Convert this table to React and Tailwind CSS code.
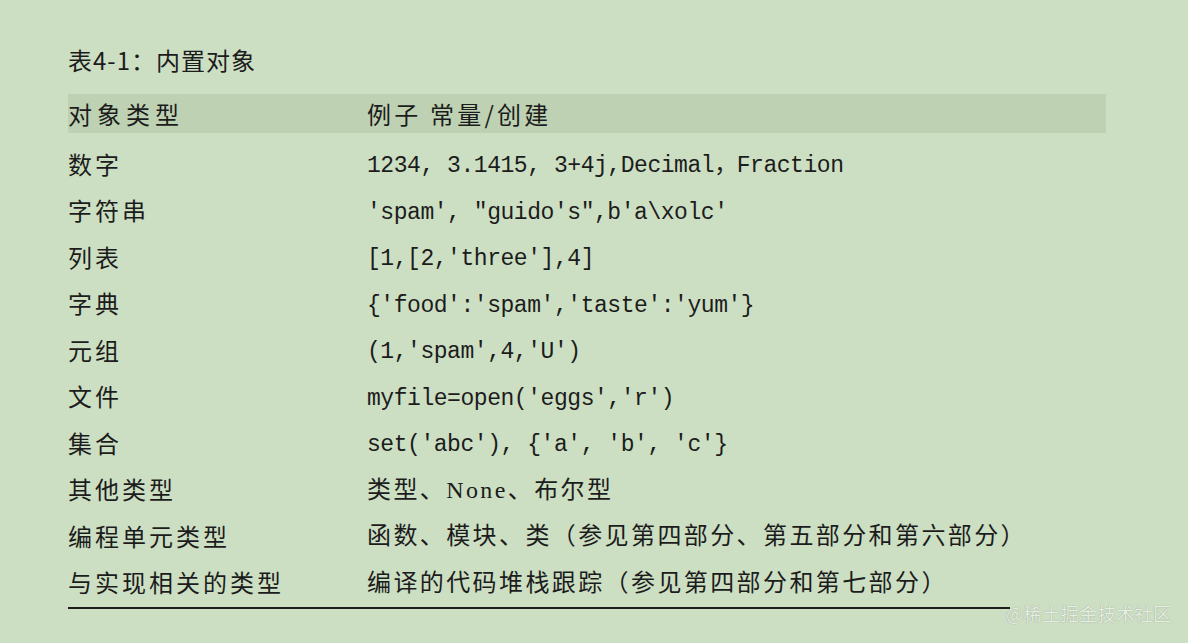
const rows = [
  { label: '数字', value: '1234, 3.1415, 3+4j,Decimal，Fraction', mono: true },
  { label: '字符串', value: `'spam', "guido's",b'a\\xolc'`, mono: true },
  { label: '列表', value: "[1,[2,'three'],4]", mono: true },
  { label: '字典', value: "{'food':'spam','taste':'yum'}", mono: true },
  { label: '元组', value: "(1,'spam',4,'U')", mono: true },
  { label: '文件', value: "myfile=open('eggs','r')", mono: true },
  { label: '集合', value: "set('abc'), {'a', 'b', 'c'}", mono: true },
  { label: '其他类型', value: '类型、None、布尔型', mono: false },
  { label: '编程单元类型', value: '函数、模块、类（参见第四部分、第五部分和第六部分）', mono: false },
  { label: '与实现相关的类型', value: '编译的代码堆栈跟踪（参见第四部分和第七部分）', mono: false },
];

function App() {
  return (
    <div className="relative w-full h-[643px] bg-[#cddfc3] pl-[68px] pt-[44px] text-[#1c1c1c] font-['Noto_Sans_CJK_SC',sans-serif]">
      <h1 className="text-[24px] leading-[32px] font-normal tracking-[1px]">表4-1：内置对象</h1>

      {/* header band */}
      <div className="mt-[18px] w-[1038px] h-[39px] bg-[#bed2b3] flex items-center">
        <div className="w-[299px] shrink-0 text-[24px] tracking-[5px]">对象类型</div>
        <div className="text-[24px] tracking-[3.2px]">例子 常量/创建</div>
      </div>

      <div className="mt-[9px] w-[1038px]">
        {rows.map((row) => (
          <div key={row.label} className="h-[46.5px] flex items-center">
            <div className="w-[299px] shrink-0 text-[24px] tracking-[3px] whitespace-nowrap pb-[3px]">{row.label}</div>
            {row.mono ? (
              <div className="font-['Liberation_Mono','Noto_Sans_CJK_SC',monospace] text-[23px] tracking-[-0.45px] whitespace-nowrap pt-[2px]">
                {row.value}
              </div>
            ) : (
              <div className="font-['Liberation_Serif','Noto_Sans_CJK_SC',serif] text-[24px] tracking-[2.4px] whitespace-nowrap pb-[2px]">
                {row.value}
              </div>
            )}
          </div>
        ))}
        <div className="w-[942px] h-[2px] bg-[#1c1c1c]"></div>
      </div>

      {/* watermark */}
      <div className="absolute left-[1006px] top-[600px] text-[18.5px] leading-[26px] text-[#e6ede2] [text-shadow:0_0_1px_#7f8f7c]">
        @稀土掘金技术社区
      </div>
    </div>
  );
}

export default App;
